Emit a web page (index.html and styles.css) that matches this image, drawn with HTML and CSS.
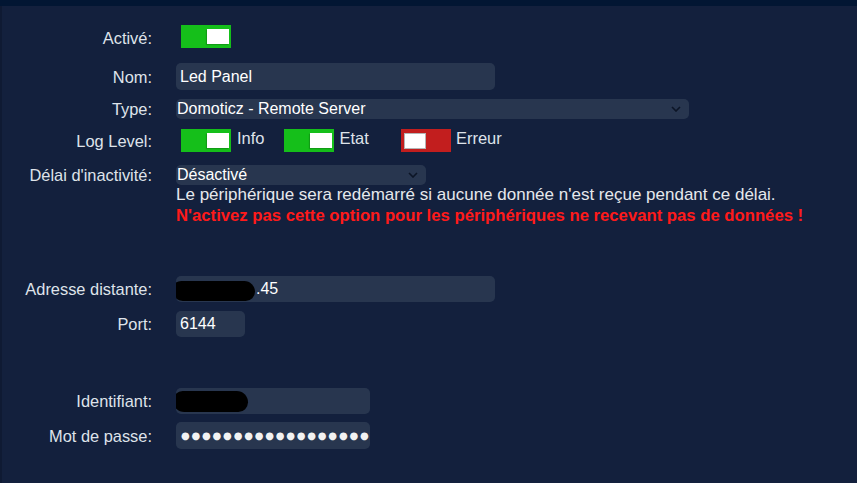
FILE: index.html
```html
<!DOCTYPE html>
<html lang="fr">
<head>
<meta charset="utf-8">
<title>Led Panel</title>
<link rel="stylesheet" href="styles.css">
</head>
<body>
<div class="topbar"></div>
<main class="panel">
  <div class="row r-active">
    <label class="lbl">Activé:</label>
    <div class="ctl"><span class="toggle on"><span class="knob"></span></span></div>
  </div>
  <div class="row r-nom">
    <label class="lbl">Nom:</label>
    <div class="ctl"><div class="field w-name h27">Led Panel</div></div>
  </div>
  <div class="row r-type">
    <label class="lbl">Type:</label>
    <div class="ctl"><div class="select w-type">Domoticz - Remote Server<svg class="chev" viewBox="0 0 10 6" width="10" height="6"><path d="M1 1 L5 5 L9 1" fill="none" stroke="#0c1526" stroke-width="1.6"/></svg></div></div>
  </div>
  <div class="row r-log">
    <label class="lbl">Log Level:</label>
    <div class="ctl levels">
      <span class="lvl"><span class="toggle on"><span class="knob"></span></span><span class="lvl-t">Info</span></span>
      <span class="lvl"><span class="toggle on"><span class="knob"></span></span><span class="lvl-t">Etat</span></span>
      <span class="lvl"><span class="toggle off"><span class="knob"></span></span><span class="lvl-t">Erreur</span></span>
    </div>
  </div>
  <div class="row r-delai top">
    <label class="lbl">Délai d'inactivité:</label>
    <div class="ctl col">
      <div class="select w-delai">Désactivé<svg class="chev" viewBox="0 0 10 6" width="10" height="6"><path d="M1 1 L5 5 L9 1" fill="none" stroke="#0c1526" stroke-width="1.6"/></svg></div>
      <p class="hint">Le périphérique sera redémarré si aucune donnée n'est reçue pendant ce délai.</p>
      <p class="warn">N'activez pas cette option pour les périphériques ne recevant pas de données !</p>
    </div>
  </div>
  <div class="row r-addr">
    <label class="lbl">Adresse distante:</label>
    <div class="ctl"><div class="field w-name h26 addr">.45<span class="blob blob-addr"></span></div></div>
  </div>
  <div class="row r-port">
    <label class="lbl">Port:</label>
    <div class="ctl"><div class="field w-port h26">6144</div></div>
  </div>
  <div class="row r-id">
    <label class="lbl">Identifiant:</label>
    <div class="ctl"><div class="field w-id h26"><span class="blob blob-id"></span></div></div>
  </div>
  <div class="row r-pass">
    <label class="lbl">Mot de passe:</label>
    <div class="ctl"><div class="field w-id h27 pass">●●●●●●●●●●●●●●●●●●●</div></div>
  </div>
</main>
</body>
</html>
```

FILE: styles.css
```css
html, body {
  margin: 0;
  padding: 0;
  height: 100%;
  background: #13203d;
  overflow: hidden;
}
body {
  font-family: "Liberation Sans", Arial, sans-serif;
  font-size: 16px;
  color: #dfe3ea;
}
.topbar {
  height: 6px;
  background: #021633;
}
.panel {
  min-height: calc(100% - 6px);
  border-left: 2px solid #0f1a33;
  padding-top: 19px;
  box-sizing: border-box;
}
.row {
  display: flex;
  align-items: center;
  gap: 24px;
}
.row.top { align-items: flex-start; }
.lbl {
  width: 150px;
  flex: none;
  text-align: right;
  color: #dfe3ea;
  font-size: 16.4px;
  line-height: 20px;
}
.ctl { display: flex; align-items: center; }
.ctl.col { flex-direction: column; align-items: flex-start; }

.r-active .lbl { padding-top: 3px; }
.r-nom { margin-top: 15px; }
.r-type { margin-top: 9px; }
.r-log { margin-top: 10px; }
.r-delai { margin-top: 13px; }
.r-addr { margin-top: 50px; }
.r-port { margin-top: 9px; }
.r-id { margin-top: 51px; }
.r-pass { margin-top: 8px; }

.toggle {
  display: inline-flex;
  align-items: center;
  box-sizing: border-box;
  width: 50px;
  height: 23px;
  padding: 0 2px 0 4px;
  margin-left: 5px;
}
.toggle.on { background: #15bf1a; justify-content: flex-end; }
.toggle.off { background: #c21e1e; justify-content: flex-start; padding: 0 3px; }
.knob {
  width: 22px;
  height: 15px;
  background: #fff;
  box-shadow: -1px 1px 1px rgba(0,0,0,0.18);
}
.toggle.off .knob {
  box-sizing: border-box;
  height: 16px;
  border: 1px solid #b5b5b5;
  box-shadow: none;
}

.levels { gap: 0; }
.lvl { display: inline-flex; align-items: center; }
.lvl-t { margin-left: 6px; color: #dfe3ea; font-size: 16.5px; position: relative; top: -2px; }
.lvl:nth-child(1) .lvl-t { margin-right: 14px; }
.lvl:nth-child(2) .lvl-t { margin-right: 27px; }
.lvl:nth-child(3) .lvl-t { margin-left: 5px; }

.field, .select {
  position: relative;
  box-sizing: border-box;
  background: #28364f;
  border-radius: 5px;
  color: #ffffff;
  padding-left: 4px;
  display: flex;
  align-items: center;
  white-space: nowrap;
  overflow: hidden;
}
.h27 { height: 27px; }
.h26 { height: 26px; }
.w-name { width: 319px; }
.w-type { width: 513px; }
.w-delai { width: 250px; }
.w-port { width: 69px; }
.w-id { width: 194px; }
.select {
  height: 20px;
  padding-left: 1px;
  justify-content: space-between;
  padding-right: 8px;
}
.chev { flex: none; }
.addr { padding-left: 80px; }

.hint {
  margin: 0;
  line-height: 20px;
  font-size: 17px;
  color: #e6e8ec;
}
.warn {
  margin: 1px 0 0;
  line-height: 20px;
  color: #ff1a1a;
  font-weight: bold;
  font-size: 16.7px;
}

.blob {
  position: absolute;
  background: #000;
  border-radius: 12px 14px 12px 14px;
}
.blob-addr { left: -4px; top: 5px; width: 83px; height: 20px; }
.blob-id { left: -3px; top: 3px; width: 75px; height: 21px; }

.pass {
  font-family: "DejaVu Sans", sans-serif;
  font-size: 10px;
  letter-spacing: 1.8px;
  padding-left: 5px;
  color: #f2f2f2;
}
```
